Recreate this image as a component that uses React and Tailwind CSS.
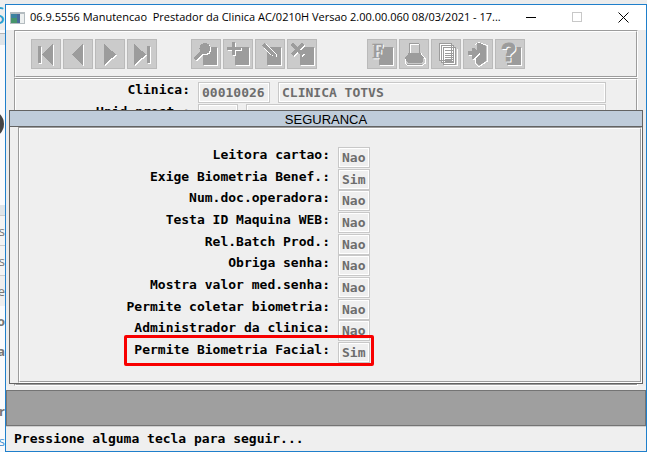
import React from "react";

const settings = [
  ["Leitora cartao:", "Nao"],
  ["Exige Biometria Benef.:", "Sim"],
  ["Num.doc.operadora:", "Nao"],
  ["Testa ID Maquina WEB:", "Nao"],
  ["Rel.Batch Prod.:", "Nao"],
  ["Obriga senha:", "Nao"],
  ["Mostra valor med.senha:", "Nao"],
  ["Permite coletar biometria:", "Nao"],
  ["Administrador da clinica:", "Nao"],
  ["Permite Biometria Facial:", "Sim", true],
];

const MONO = "font-['DejaVu_Sans_Mono','Liberation_Mono',monospace] text-[13px] font-bold";

function Groove({ className = "", inner = "", children }) {
  return (
    <div className={`border border-t-[#9c9c9c] border-l-[#9c9c9c] border-r-white border-b-white ${className}`}>
      <div className={`h-full border border-t-white border-l-white border-r-[#9c9c9c] border-b-[#9c9c9c] ${inner}`}>
        {children}
      </div>
    </div>
  );
}

function Field({ id, value, className = "", label }) {
  return (
    <input
      id={id}
      aria-label={label}
      readOnly
      value={value}
      className={`block h-[21px] min-w-0 rounded-none border border-[#c8c8c8] bg-[#efefef] px-[3px] text-[#6d6d6d] shadow-[inset_0_0_0_1px_#fff] outline-none ${MONO} ${className}`}
    />
  );
}

/* Disabled glyph: a white copy one pixel down and right under the grey shape. */
function Etched({ children }) {
  return (
    <>
      <g transform="translate(1 1)" fill="#fff" stroke="#fff">{children}</g>
      <g fill="#9c9c9c" stroke="#9c9c9c">{children}</g>
    </>
  );
}

const Sheet = ({ x = 12 }) => (
  <Etched>
    <rect x={x} y="8" width="14" height="18" stroke="none" />
  </Etched>
);

const icons = {
  Primeiro: (
    <Etched>
      <path d="M7 7h3v17h-3zM11 15.500L22 5v21z" stroke="none" />
    </Etched>
  ),
  Anterior: (
    <Etched>
      <path d="M9 15.500L20 5v21z" stroke="none" />
    </Etched>
  ),
  Proximo: (
    <Etched>
      <path d="M9 5L21 15.500L9 26z" stroke="none" />
    </Etched>
  ),
  Ultimo: (
    <Etched>
      <path d="M7 5L19 15.500L7 26zM20 7h3v17h-3z" stroke="none" />
    </Etched>
  ),
  Pesquisar: (
    <>
      <Sheet />
      <Etched>
        <circle cx="14" cy="9.500" r="5.500" stroke="none" />
        <path d="M11 13L5 19" fill="none" strokeWidth="3.500" strokeLinecap="round" />
      </Etched>
    </>
  ),
  Incluir: (
    <>
      <Sheet />
      <Etched>
        <path d="M9 3h3v5h6v3h-6v5h-3v-5h-5v-3h5z" stroke="none" />
      </Etched>
    </>
  ),
  Alterar: (
    <>
      <Sheet />
      <path d="M11.500 5.500L21.500 15.500v2h-3L9.500 9.500" fill="none" stroke="#fff" />
      <path d="M8.500 5.500L18.500 15.500" fill="none" stroke="#9c9c9c" strokeWidth="4" />
      <path d="M20.500 14.500v3h-3" fill="none" stroke="#9c9c9c" />
    </>
  ),
  Excluir: (
    <>
      <Sheet x={13} />
      <Etched>
        <path d="M5 5L16 16M16 5L5 16" fill="none" strokeWidth="3" />
      </Etched>
    </>
  ),
  Formulario: (
    <>
      <Sheet />
      <Etched>
        <text x="5" y="19" strokeWidth="0.500" className="font-['Liberation_Serif',serif] text-[20px]">F</text>
      </Etched>
    </>
  ),
  Imprimir: (
    <>
      <path d="M11 4.500h9l1 10 5 5v5l-3 2h-14l-3-2v-5l4-5z" fill="#cbcbcb" stroke="#9c9c9c" />
      <path d="M11.500 14V5.500h8M6.500 24.500v-4l3-4M7 25.500l3 1h13l3-2v-5l-4-5" fill="none" stroke="#fff" />
      <path d="M10 14h11l3 4v4l-2 2h-13l-2-2v-4z" fill="#9c9c9c" />
      <path d="M8 25h15" stroke="#9c9c9c" />
    </>
  ),
  Copiar: (
    <>
      <path d="M8.500 4.500h12v17h-12zM10.500 6.500h12v17h-12zM12.500 8.500h12v17h-12z" fill="#fff" stroke="#9c9c9c" />
      <path d="M13 26.500h13.500V10" fill="none" stroke="#fff" />
      <path d="M14 11.500h9M14 14.500h9M14 16.500h9M14 18.500h9M14 20.500h9M14 22.500h9" stroke="#9c9c9c" />
    </>
  ),
  Sair: (
    <>
      <path d="M12 5.500l4-2 8 3v16l-8 5-4-3v-5" fill="none" stroke="#fff" />
      <path d="M14 4h3l6 3v15l-6 4h-2l-2-2v-4l1-12z" fill="#9c9c9c" />
      <Etched>
        <path d="M5 12h4V9h2l5 5-5 6h-2v-4h-4z" stroke="none" />
      </Etched>
    </>
  ),
  Ajuda: (
    <>
      <Sheet />
      <Etched>
        <text x="6" y="22" strokeWidth="1" className="font-['Liberation_Sans',sans-serif] text-[25px] font-bold">?</text>
      </Etched>
    </>
  ),
};

function ToolGroup({ names }) {
  return (
    <div className="flex gap-0.5">
      {names.map((name) => (
        <button key={name} type="button" disabled aria-label={name} className="size-[30px] border border-[#bababa] bg-[#cbcbcb]">
          <svg viewBox="1 1 28 28" className="size-7" shapeRendering="crispEdges">
            {icons[name]}
          </svg>
        </button>
      ))}
    </div>
  );
}

function TitleBar() {
  return (
    <header className="flex h-[25px] items-center bg-white pl-1">
      <svg width="15" height="12" viewBox="0 0 15 12" shapeRendering="crispEdges" className="shrink-0">
        <rect width="15" height="12" fill="#b4bcc0" />
        <rect x="1" y="2" width="9" height="9" fill="#3c83a0" />
        <rect x="1" y="6" width="6" height="5" fill="#46946c" />
        <rect x="7" y="2" width="3" height="9" fill="#486a9c" />
        <rect x="10" y="2" width="4" height="9" fill="#edf0f0" />
      </svg>
      <h1 className="ml-[5px] min-w-0 flex-1 font-['Open_Sans','Noto_Sans',sans-serif] text-[11px] whitespace-pre text-black">
        {"06.9.5556 Manutencao  Prestador da Clinica AC/0210H Versao 2.00.00.060 08/03/2021 - 17..."}
      </h1>
      <div className="flex shrink-0">
        <button type="button" aria-label="Minimizar" className="flex h-6 w-[46px] items-center justify-center">
          <svg width="11" height="11" shapeRendering="crispEdges"><path d="M0 5.500h10" stroke="#000" /></svg>
        </button>
        <button type="button" disabled aria-label="Maximizar" className="flex h-6 w-[46px] items-center justify-center">
          <svg width="11" height="11" shapeRendering="crispEdges"><path d="M.5.5h9v9h-9z" fill="none" stroke="#c8c8c8" /></svg>
        </button>
        <button type="button" aria-label="Fechar" className="flex h-6 w-[46px] items-center justify-center">
          <svg width="11" height="11"><path d="M.5.5l10 10M10.500.5l-10 10" stroke="#000" /></svg>
        </button>
      </div>
    </header>
  );
}

function SecurityDialog() {
  return (
    <section role="dialog" aria-label="SEGURANCA" className="absolute inset-x-[3px] top-[105px] border border-[#636363] bg-[#efefef]">
      <h2 className="h-4 border-b border-[#636363] bg-[#bfccda] text-center font-['Liberation_Sans',Arial,sans-serif] text-[13px] leading-[17px] text-black">
        SEGURANCA
      </h2>
      <Groove className="ml-2" inner="py-[18px]">
        {settings.map(([label, value, marked], i) => (
          <div key={label} className="relative mt-px flex w-[350px] gap-2 first:mt-0 nth-[3n]:mt-0">
            <label htmlFor={`opcao-${i}`} className={`flex-1 text-right leading-4 whitespace-nowrap ${MONO}`}>
              {label}
            </label>
            <Field id={`opcao-${i}`} value={value} className="w-8" />
            {marked && (
              <span className="pointer-events-none absolute -top-[7px] -right-1 -bottom-[3px] w-[250px] rounded-xs border-3 border-[#f80000]" />
            )}
          </div>
        ))}
      </Groove>
    </section>
  );
}

function PageBehind() {
  return (
    <aside aria-hidden="true" className="flex w-[5px] shrink-0 flex-col overflow-hidden bg-[#f9fafc] font-['Open_Sans',sans-serif] text-[13px] leading-[30px] text-[#777]">
      <div className="flex h-[30px] shrink-0 justify-end bg-[#eeeeee] text-2xl leading-[30px] text-[#2f9fd0]">S</div>
      <div className="mt-[3px] h-3 shrink-0 border-t border-[#b5b5b5] bg-[#dfe4e8]" />
      <div className="mt-[65px] -ml-6 h-7 w-7 shrink-0 rounded-full bg-[#444]" />
      <div className="mt-[67px] h-[11px] shrink-0 border-b border-[#ccc] bg-[#dfe4e8]" />
      <div className="flex h-[30px] shrink-0 justify-end border-b border-[#ccc] bg-[#f3f3f3]">es</div>
      <div className="flex h-[30px] shrink-0 justify-end border-b border-[#ccc] bg-[#f3f3f3]">s</div>
      <div className="flex h-[30px] shrink-0 justify-end bg-[#eeeeee]">be</div>
      <div className="flex h-[30px] shrink-0 justify-end font-bold">ro</div>
      <div className="flex h-[30px] shrink-0 justify-end font-bold">ia</div>
      <div className="mt-[30px] flex h-[30px] shrink-0 justify-end font-bold">r</div>
      <div className="flex h-6 shrink-0 justify-end text-[#3f8fd0]">s</div>
    </aside>
  );
}

export default function App() {
  return (
    <div className="flex min-h-screen bg-[#ececec]">
      <PageBehind />
      <main className="relative mt-1 flex min-w-0 flex-1 flex-col border border-[#1f7fcb] bg-[#efefef]">
        <TitleBar />
        <div className="bg-[#ececec] px-2">
          <Groove inner="flex bg-[#efefef] py-[7px] pl-[15px]">
            <ToolGroup names={["Primeiro", "Anterior", "Proximo", "Ultimo"]} />
            <div className="ml-[34px]">
              <ToolGroup names={["Pesquisar", "Incluir", "Alterar", "Excluir"]} />
            </div>
            <div className="ml-[50px]">
              <ToolGroup names={["Formulario", "Imprimir", "Copiar", "Sair", "Ajuda"]} />
            </div>
          </Groove>
          <Groove className="h-[308px]" inner="bg-[#efefef] pt-0.5 pr-[30px]">
            <div className="flex gap-2">
              <label htmlFor="clinica" className={`w-[174px] text-right leading-4 ${MONO}`}>Clinica:</label>
              <Field id="clinica" value="00010026" className="w-[72px]" />
              <Field label="Nome da clinica" value="CLINICA TOTVS" className="flex-1" />
            </div>
            <div className="mt-px flex gap-2">
              <label htmlFor="unidade" className={`w-[174px] text-right leading-4 ${MONO}`}>Unid.prest.:</label>
              <Field id="unidade" value="" className="w-10" />
              <Field label="Nome da unidade" value="" className="flex-1" />
            </div>
          </Groove>
        </div>
        <div className="mt-1 h-9 border border-[#747474] bg-[#9f9f9f]" />
        <p className={`border-t border-[#cfcfcf] px-2 leading-6 text-black ${MONO}`}>
          Pressione alguma tecla para seguir...
        </p>
        <SecurityDialog />
      </main>
    </div>
  );
}
